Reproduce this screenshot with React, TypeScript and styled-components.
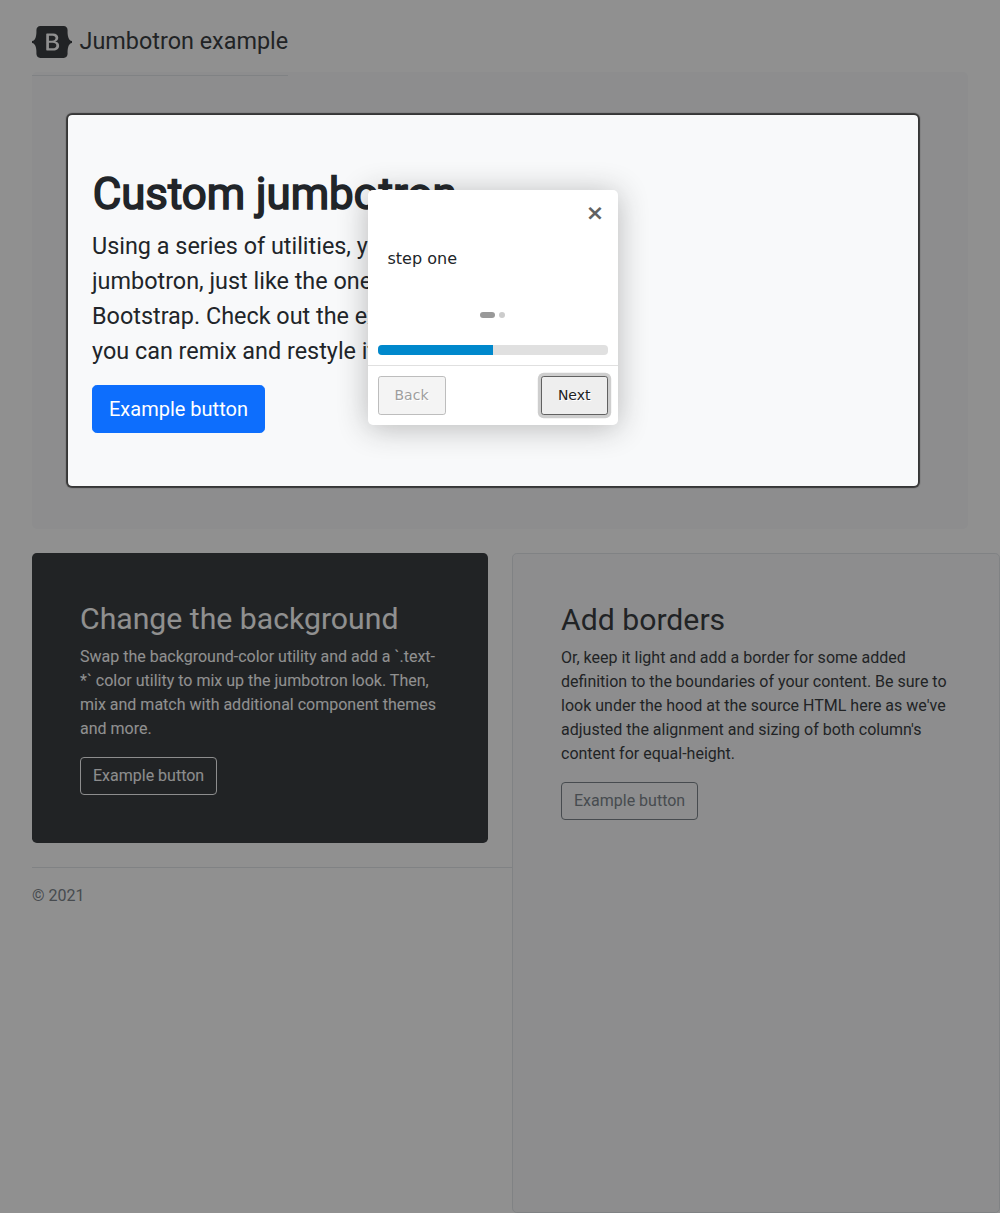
import React from "react";
import styled, { createGlobalStyle, css } from "styled-components";

const GlobalStyle = createGlobalStyle`
  *, *::before, *::after { box-sizing: border-box; }
  body {
    margin: 0;
    background: #fff;
    color: #212529;
    font-family: Roboto, "Liberation Sans", sans-serif;
    font-size: 16px;
    line-height: 1.5;
  }
`;

const Page = styled.div`
  position: relative;
  width: 1000px;
  height: 1213px;
  overflow: hidden;
  padding: 24px 0 0 32px;
  display: flex;
  flex-direction: column;
`;

const Header = styled.header`
  position: relative;
  align-self: flex-start;
  height: 52px;
  margin-bottom: -4px;
  border-bottom: 1px solid #dee2e6;
`;

const Brand = styled.a`
  display: flex;
  align-items: center;
  color: #212529;
  font-size: 23.4px;
  line-height: 35.1px;
  text-decoration: none;
  white-space: nowrap;

  svg {
    margin-right: 7.5px;
  }
`;

const Jumbotron = styled.section`
  flex: none;
  width: 936px;
  padding: 48px;
  margin-bottom: 24px;
  border-radius: 5px;
  background: #f8f9fa;
`;

const JumbotronBody = styled.div`
  padding: 48px 12px;
`;

const Title = styled.h1`
  margin: 0 0 8px;
  padding-left: 0.7px;
  font-size: 43.8px;
  font-weight: 400;
  -webkit-text-stroke: 1.6px currentColor;
  line-height: 1.2;
`;

const Lead = styled.p`
  width: 544px;
  margin: 0 0 16px;
  font-size: 23.4px;
`;

const Button = styled.button<{ $kind: "primary" | "light" | "secondary" }>`
  display: block;
  font-family: inherit;
  line-height: 1.5;
  ${({ $kind }) =>
    $kind === "primary"
      ? css`
          padding: 8px 16px;
          border: 1px solid #0d6efd;
          border-radius: 4.8px;
          background: #0d6efd;
          color: #fff;
          font-size: 20px;
        `
      : css`
          padding: 6px 12px;
          border: 1px solid ${$kind === "light" ? "#f8f9fa" : "#6c757d"};
          border-radius: 4px;
          background: transparent;
          color: ${$kind === "light" ? "#f8f9fa" : "#6c757d"};
          font-size: 16px;
        `}
`;

const Columns = styled.div`
  flex: 1;
  display: grid;
  grid-template-columns: 480px 488px;
`;

const Card = styled.article<{ $dark?: boolean }>`
  padding: 48px;
  border-radius: 4.8px;
  ${({ $dark }) =>
    $dark
      ? css`
          margin-right: 24px;
          background: #212529;
          color: #fff;
        `
      : css`
          border: 1px solid #dee2e6;
          background: #f8f9fa;
        `}

  h2 {
    margin: 0 0 8px;
    font-size: 30.2px;
    font-weight: 400;
    line-height: 1.2;
  }

  p {
    margin: 0 0 16px;
  }
`;

const Footer = styled.footer`
  margin-top: 24px;
  padding-top: 16px;
  border-top: 1px solid #dee2e6;
  color: #6c757d;
`;

const Highlight = styled.div`
  position: absolute;
  left: 68px;
  top: 115px;
  width: 850px;
  height: 371px;
  border-radius: 4px;
  box-shadow: 0 0 1px 2px rgba(33, 33, 33, 0.8), 0 0 0 5000px rgba(33, 33, 33, 0.5);
`;

const Tooltip = styled.div`
  position: absolute;
  left: 367.5px;
  top: 190px;
  width: 250px;
  display: flex;
  flex-direction: column;
  border-radius: 5px;
  background: #fff;
  box-shadow: 0 3px 30px rgba(33, 33, 33, 0.3);
  font-family: "DejaVu Sans", sans-serif;
`;

const TooltipHeader = styled.div`
  display: flex;
  justify-content: flex-end;
  height: 37px;
`;

const Close = styled.a`
  width: 45px;
  height: 45px;
  color: #616161;
  font-size: 22px;
  font-weight: 700;
  line-height: 45px;
  text-align: center;
`;

const TooltipText = styled.div`
  padding: 20px;
`;

const Bullets = styled.div`
  display: flex;
  justify-content: center;
  gap: 4px;
  padding: 21px 1px 17px 0;
`;

const Bullet = styled.span<{ $active?: boolean }>`
  width: ${({ $active }) => ($active ? 15 : 6)}px;
  height: 6px;
  border-radius: 10px;
  background: ${({ $active }) => ($active ? "#999" : "#ccc")};
`;

const Progress = styled.div`
  height: 10px;
  margin: 10px;
  overflow: hidden;
  border-radius: 4px;
  background: #e0e0e0;
`;

const ProgressBar = styled.div`
  height: 100%;
  background: #08c;
`;

const TooltipActions = styled.div`
  display: flex;
  justify-content: space-between;
  padding: 10px;
  border-top: 1px solid #e0e0e0;
`;

const StepButton = styled.button<{ $focused?: boolean }>`
  padding: 8px 16px;
  border: 1px solid ${({ $focused }) => ($focused ? "#616161" : "#bdbdbd")};
  border-radius: 0.2em;
  background: ${({ $focused }) => ($focused ? "#eee" : "#f4f4f4")};
  box-shadow: ${({ $focused }) => ($focused ? "0 0 0 3.2px rgba(158, 158, 158, 0.5)" : "none")};
  color: ${({ $focused }) => ($focused ? "#212121" : "#9e9e9e")};
  font-family: inherit;
  font-size: 14px;
  line-height: 21px;
  text-shadow: 1px 1px 0 #fff;
`;

const steps = ["step one", "step two"];
const current = 0;

const Logo = () => (
  <svg width="40" height="32" viewBox="0 0 118 94">
    <path
      fill="currentColor"
      fillRule="evenodd"
      clipRule="evenodd"
      d="M24.509 0c-6.733 0-11.715 5.893-11.492 12.284.214 6.14-.064 14.092-2.066 20.577C8.943 39.365 5.547 43.485 0 44.014v5.972c5.547.529 8.943 4.649 10.951 11.153 2.002 6.485 2.28 14.437 2.066 20.577C12.794 88.106 17.776 94 24.51 94H93.5c6.733 0 11.714-5.893 11.491-12.284-.214-6.14.064-14.092 2.066-20.577 2.009-6.504 5.396-10.624 10.943-11.153v-5.972c-5.547-.529-8.934-4.649-10.943-11.153-2.002-6.484-2.28-14.437-2.066-20.577C105.214 5.894 100.233 0 93.5 0H24.508zM80 57.863C80 66.663 73.436 72 62.543 72H44a2 2 0 01-2-2V24a2 2 0 012-2h18.437c9.083 0 15.044 4.92 15.044 12.474 0 5.302-4.01 10.049-9.119 10.88v.277C75.317 46.394 80 51.21 80 57.863zM60.521 28.34H49.948v14.934h8.905c6.884 0 10.68-2.772 10.68-7.727 0-4.643-3.264-7.207-9.012-7.207zM49.948 49.2v16.458H60.91c7.167 0 10.964-2.876 10.964-8.281 0-5.406-3.903-8.178-11.425-8.178H49.948z"
    />
  </svg>
);

export default function App() {
  return (
    <>
      <GlobalStyle />
      <Page>
        <Header>
          <Brand>
            <Logo />
            <span>Jumbotron example</span>
          </Brand>
        </Header>
        <Jumbotron>
          <JumbotronBody>
            <Title>Custom jumbotron</Title>
            <Lead>
              Using a series of utilities, you can create this jumbotron, just like the one in
              previous versions of Bootstrap. Check out the examples below for how you can remix
              and restyle it to your liking.
            </Lead>
            <Button $kind="primary">Example button</Button>
          </JumbotronBody>
        </Jumbotron>
        <Columns>
          <div>
            <Card $dark>
              <h2>Change the background</h2>
              <p>
                Swap the background-color utility and add a `.text-*` color utility to mix up the
                jumbotron look. Then, mix and match with additional component themes and more.
              </p>
              <Button $kind="light">Example button</Button>
            </Card>
            <Footer>© 2021</Footer>
          </div>
          <Card>
            <h2>Add borders</h2>
            <p>
              Or, keep it light and add a border for some added definition to the boundaries of
              your content. Be sure to look under the hood at the source HTML here as we've
              adjusted the alignment and sizing of both column's content for equal-height.
            </p>
            <Button $kind="secondary">Example button</Button>
          </Card>
        </Columns>
        <Highlight />
        <Tooltip>
          <TooltipHeader>
            <Close>×</Close>
          </TooltipHeader>
          <TooltipText>{steps[current]}</TooltipText>
          <Bullets>
            {steps.map((step, i) => (
              <Bullet key={step} $active={i === current} />
            ))}
          </Bullets>
          <Progress>
            <ProgressBar style={{ width: `${((current + 1) / steps.length) * 100}%` }} />
          </Progress>
          <TooltipActions>
            <StepButton>Back</StepButton>
            <StepButton $focused>Next</StepButton>
          </TooltipActions>
        </Tooltip>
      </Page>
    </>
  );
}
